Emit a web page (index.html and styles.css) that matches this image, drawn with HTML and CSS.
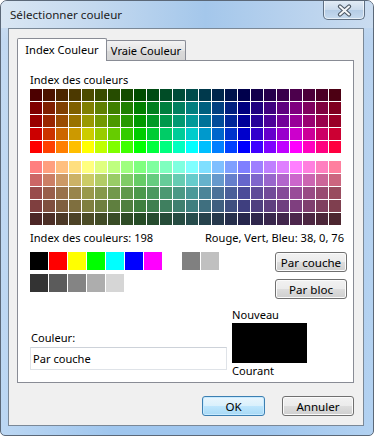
FILE: index.html
```html
<!DOCTYPE html>
<html lang="fr">
<head>
  <meta charset="UTF-8">
  <title>Sélectionner couleur</title>
  <link rel="stylesheet" href="styles.css">
</head>
<body>

<div class="window">
  <div class="titlebar">
    <span class="title">Sélectionner couleur</span>
    <div class="close-btn">
      <svg width="15" height="13" viewBox="0 0 15 13">
        <path d="M3 2.5 L12 10.5 M12 2.5 L3 10.5" stroke="#4d5966" stroke-width="4.2" stroke-linecap="round"/>
        <path d="M3 2.5 L12 10.5 M12 2.5 L3 10.5" stroke="#f4f6f8" stroke-width="2" stroke-linecap="round"/>
      </svg>
    </div>
  </div>

  <div class="client">
    <!-- tabs -->
    <div class="tabs">
      <div class="tab active">Index Couleur</div>
      <div class="tab">Vraie Couleur</div>
    </div>

    <div class="panel">
      <div class="label">Index des couleurs</div>
      <div class="aci-grid" id="gridTop"></div>
      <div class="aci-grid lower" id="gridBottom"></div>

      <div class="info-row">
        <span>Index des couleurs: 198</span>
        <span>Rouge, Vert, Bleu: 38, 0, 76</span>
      </div>

      <div class="std-area">
        <div class="swatches">
          <div class="sw" style="background:#000000"></div>
          <div class="sw" style="background:#ff0000"></div>
          <div class="sw" style="background:#ffff00"></div>
          <div class="sw" style="background:#00ff00"></div>
          <div class="sw" style="background:#00ffff"></div>
          <div class="sw" style="background:#0000ff"></div>
          <div class="sw" style="background:#ff00ff"></div>
          <div class="sw empty"></div>
          <div class="sw" style="background:#808080"></div>
          <div class="sw" style="background:#c0c0c0"></div>
          <div class="sw" style="background:#333333"></div>
          <div class="sw" style="background:#5b5b5b"></div>
          <div class="sw" style="background:#848484"></div>
          <div class="sw" style="background:#adadad"></div>
          <div class="sw" style="background:#d6d6d6"></div>
        </div>
        <div class="side-buttons">
          <button class="btn">Par couche</button>
          <button class="btn">Par bloc</button>
        </div>
      </div>

      <div class="bottom-area">
        <div class="color-field">
          <div class="field-label">Couleur:</div>
          <div class="text-input">Par couche</div>
        </div>
        <div class="preview">
          <div class="preview-label">Nouveau</div>
          <div class="preview-box"></div>
          <div class="preview-label">Courant</div>
        </div>
      </div>
    </div>

    <div class="dialog-buttons">
      <button class="btn default ok">OK</button>
      <button class="btn cancel">Annuler</button>
    </div>
  </div>
</div>

<script>
  // AutoCAD index colours: 24 hues, even = full saturation, odd = pastel
  function hsv(hue, v, s) {
    const V = 255 * v;
    const hh = hue / 60;
    const i = Math.floor(hh) % 6;
    const f = hh - Math.floor(hh);
    const p = V * (1 - s);
    const q = V * (1 - s * f);
    const t = V * (1 - s * (1 - f));
    let rgb;
    switch (i) {
      case 0: rgb = [V, t, p]; break;
      case 1: rgb = [q, V, p]; break;
      case 2: rgb = [p, V, t]; break;
      case 3: rgb = [p, q, V]; break;
      case 4: rgb = [t, p, V]; break;
      default: rgb = [V, p, q];
    }
    return 'rgb(' + rgb.map(c => Math.floor(c + 1e-6)).join(',') + ')';
  }

  function fill(id, levels, sat) {
    const grid = document.getElementById(id);
    levels.forEach(v => {
      for (let h = 0; h < 24; h++) {
        const cell = document.createElement('div');
        cell.className = 'cell';
        cell.style.background = hsv(h * 15, v, sat);
        grid.appendChild(cell);
      }
    });
  }

  fill('gridTop', [0.3, 0.5, 0.6, 0.8, 1.0], 1);
  fill('gridBottom', [1.0, 0.8, 0.6, 0.5, 0.3], 0.5);
</script>

</body>
</html>
```

FILE: styles.css
```css
body {
  margin: 0;
  padding: 0;
  background: #ffffff;
  font-family: "Noto Sans", "Open Sans", sans-serif;
  font-size: 11.1px;
  color: #000;
}

.window {
  width: 374px;
  height: 436px;
  box-sizing: border-box;
  border: 1px solid #5b6878;
  border-radius: 7px 7px 5px 5px;
  background:
    linear-gradient(to right, rgba(255,255,255,0.3), rgba(255,255,255,0) 30%, rgba(255,255,255,0) 70%, rgba(255,255,255,0.2)),
    linear-gradient(to bottom, #c0d6ee 0, #a9c9ec 40px, #9fc6ee 100%);
  overflow: hidden;
}

.titlebar {
  height: 27px;
  display: flex;
  justify-content: space-between;
  align-items: flex-start;
  padding: 0 8px 0 9px;
  background: linear-gradient(to right, #d9e6f3 0%, #c4d9ef 25%, #a4c7eb 55%, #b5d0ed 75%, #cadcf0 100%);
}

.title {
  line-height: 28px;
  font-size: 11.6px;
  color: #1c1c1c;
}

.close-btn {
  width: 42px;
  height: 20px;
  margin-top: -1px;
  box-sizing: border-box;
  border: 1px solid #5f6f82;
  border-top: none;
  border-radius: 0 0 5px 5px;
  background: linear-gradient(to bottom, #e4edf6 0%, #cbdbec 50%, #b3cbe5 51%, #c6daee 100%);
  box-shadow: inset 0 0 0 1px rgba(255,255,255,0.6);
  display: flex;
  align-items: center;
  justify-content: center;
  padding-top: 2px;
}

.client {
  margin: 0 9px 9px 7px;
  height: 398px;
  box-sizing: border-box;
  border: 1px solid #7a8897;
  background: #f0f0f0;
  padding: 9px 9px 0 8px;
}

/* tabs */
.tabs {
  display: flex;
  align-items: flex-end;
  height: 22px;
}

.tab {
  box-sizing: border-box;
  width: 80px;
  height: 20px;
  margin-left: -1px;
  border: 1px solid #898c95;
  border-bottom: none;
  background: linear-gradient(to bottom, #f3f3f3, #e5e5e5 50%, #dadada 51%, #d4d4d4);
  text-align: center;
  line-height: 20px;
  border-radius: 2px 2px 0 0;
}

.tab.active {
  width: 90px;
  height: 23px;
  margin-left: 0;
  margin-bottom: -1px;
  background: #ffffff;
  position: relative;
  z-index: 1;
  line-height: 21px;
}

.panel {
  box-sizing: border-box;
  width: 337px;
  height: 323px;
  border: 1px solid #898c95;
  background: #ffffff;
  padding: 11px 6px 0 12px;
}

.label {
  line-height: 16px;
  margin-bottom: 1px;
}

.aci-grid {
  display: grid;
  grid-template-columns: repeat(24, 12px);
  grid-auto-rows: 12px;
  gap: 1px;
}

.aci-grid.lower {
  margin-top: 8px;
}

.info-row {
  display: flex;
  justify-content: space-between;
  line-height: 16px;
  margin-top: 5px;
  padding-right: 3px;
}

.std-area {
  display: flex;
  justify-content: space-between;
  margin-top: 6px;
}

.swatches {
  display: grid;
  grid-template-columns: repeat(10, 18px);
  grid-auto-rows: 18px;
  column-gap: 1px;
  row-gap: 4px;
}

.side-buttons {
  display: flex;
  flex-direction: column;
  gap: 7px;
}

.btn {
  font-family: inherit;
  font-size: 11.6px;
  color: #000;
  box-sizing: border-box;
  width: 72px;
  height: 20px;
  padding: 0;
  border: 1px solid #707070;
  border-radius: 3px;
  background: linear-gradient(to bottom, #f2f2f2 0%, #ebebeb 50%, #dddddd 51%, #cfcfcf 100%);
  box-shadow: inset 0 0 0 1px #fbfbfb;
}

.btn.default {
  border-color: #3c7fb1;
  background: linear-gradient(to bottom, #eaf6fd 0%, #d9f0fc 50%, #bee6fd 51%, #a7d9f5 100%);
  box-shadow: inset 0 0 0 1px #c7eaff;
}

.btn.ok {
  width: 63px;
}

.bottom-area {
  display: flex;
  margin-top: 8px;
  gap: 5px;
}

.color-field {
  margin-top: 23px;
  width: 197px;
}

.field-label {
  line-height: 16px;
  padding-left: 1px;
  margin-bottom: 1px;
}

.text-input {
  box-sizing: border-box;
  height: 23px;
  border: 1px solid #dfe3e8;
  border-top-color: #cdd2d9;
  background: #fff;
  padding-left: 2px;
  line-height: 21px;
}

.preview-label {
  line-height: 16px;
}

.preview-box {
  width: 75px;
  height: 40px;
  background: #000;
}

.dialog-buttons {
  display: flex;
  justify-content: flex-end;
  gap: 17px;
  margin-top: 13px;
  padding-right: 0;
}
```
